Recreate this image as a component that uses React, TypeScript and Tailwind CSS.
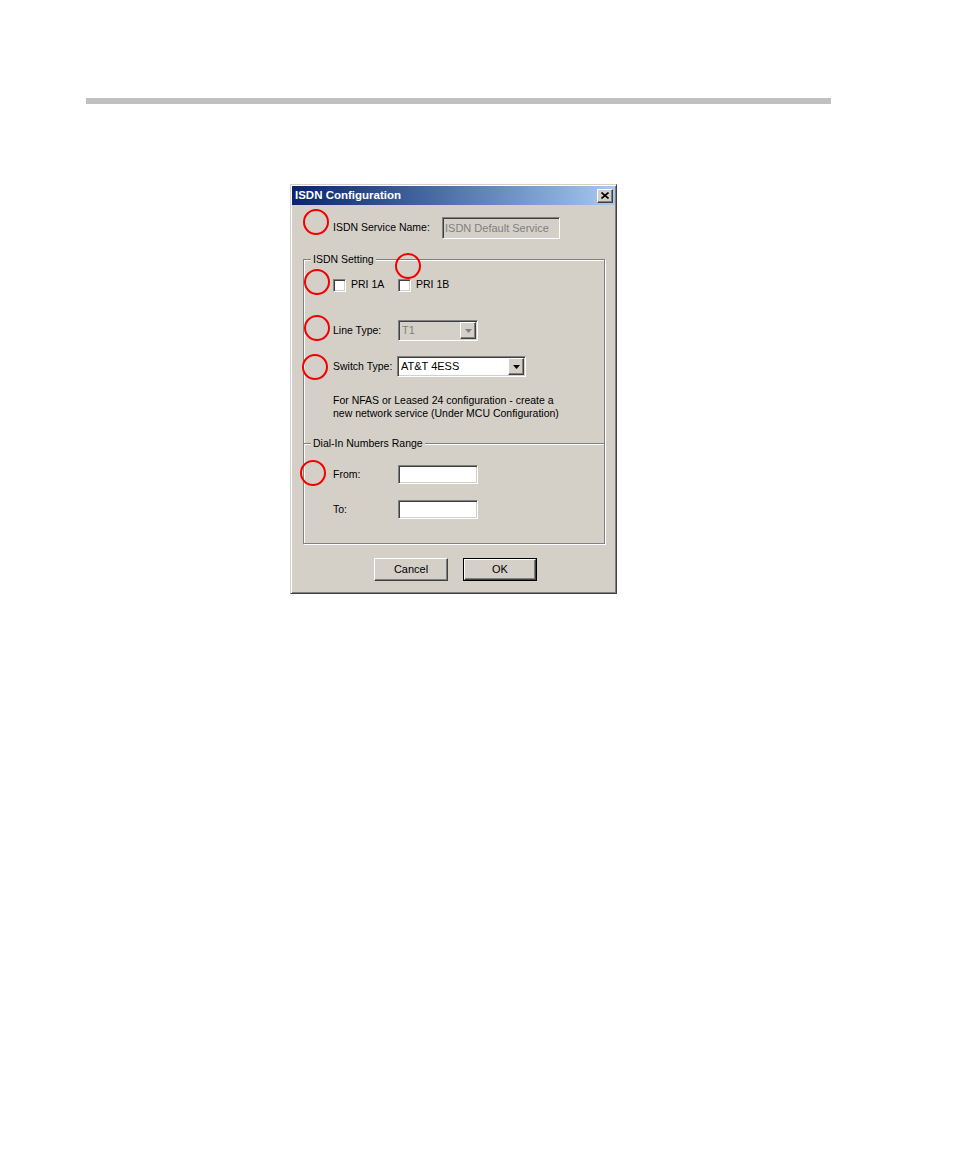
import React from "react";

const sunken =
  "border border-t-[#808080] border-l-[#808080] border-b-white border-r-white shadow-[inset_1px_1px_0_#404040,inset_-1px_-1px_0_#d4d0c8]";
const raised =
  "border border-t-white border-l-white border-b-[#404040] border-r-[#404040] shadow-[inset_-1px_-1px_0_#808080]";
const etched =
  "border-[#808080] shadow-[1px_1px_0_#ffffff,inset_1px_1px_0_#ffffff]";

function Mark({ className }: { className: string }) {
  // red annotation circle drawn over the dialog
  return (
    <div
      className={`absolute w-[26px] h-[26px] rounded-full border-2 border-[#f20000] ${className}`}
    />
  );
}

function Combo({
  value,
  width,
  disabled,
}: {
  value: string;
  width: string;
  disabled?: boolean;
}) {
  return (
    <div
      className={`${sunken} ${width} h-[21px] flex items-center ${
        disabled ? "bg-[#d4d0c8]" : "bg-white"
      }`}
    >
      <span
        className={`flex-1 pl-[3px] leading-none text-[11px] ${
          disabled ? "text-[#808080]" : "text-black"
        }`}
      >
        {value}
      </span>
      <div
        className={`${raised} bg-[#d4d0c8] w-[16px] h-[17px] mr-[1px] flex items-center justify-center`}
      >
        <svg width="7" height="4" viewBox="0 0 7 4">
          <path d="M0 0h7L3.5 4z" fill={disabled ? "#808080" : "#000"} />
        </svg>
      </div>
    </div>
  );
}

function Check({ label }: { label: string }) {
  return (
    <div className="flex items-center">
      <div className={`${sunken} bg-white w-[13px] h-[13px]`} />
      <span className="ml-[5px] w-[47px]">{label}</span>
    </div>
  );
}

export default function App() {
  return (
    <div
      className="bg-white min-h-[1155px] w-full overflow-hidden text-[10.5px] text-black"
      style={{ fontFamily: '"Liberation Sans", Arial, sans-serif' }}
    >
      {/* page rule */}
      <div className="mt-[98px] ml-[86px] w-[745px] h-[6px] bg-[#c0c0c0]" />

      {/* dialog */}
      <div className="relative mt-[80px] ml-[290px] w-[327px] h-[410px] bg-[#d4d0c8] border border-t-[#d4d0c8] border-l-[#d4d0c8] border-b-[#404040] border-r-[#404040] shadow-[inset_1px_1px_0_#ffffff,inset_-1px_-1px_0_#808080]">
        {/* title bar */}
        <div className="mx-[1px] mt-[1px] h-[19px] flex items-center justify-between bg-gradient-to-r from-[#0a246a] to-[#a6caf0] pl-[3px] pr-[2px]">
          <span className="text-white font-bold text-[11.5px] leading-none">
            ISDN Configuration
          </span>
          <div
            className={`${raised} bg-[#d4d0c8] w-[16px] h-[14px] flex items-center justify-center`}
          >
            <svg width="8" height="7" viewBox="0 0 8 7">
              <path
                d="M0.5 0.5l7 6M7.5 0.5l-7 6"
                stroke="#000"
                strokeWidth="1.6"
              />
            </svg>
          </div>
        </div>

        {/* service name */}
        <div className="mt-[12px] h-[22px] flex items-center pl-[42px]">
          <span className="w-[109px]">ISDN Service Name:</span>
          <div
            className={`${sunken} bg-[#d4d0c8] w-[118px] h-[22px] flex items-center pl-[2px] text-[11px] text-[#808080]`}
          >
            ISDN Default Service
          </div>
        </div>

        {/* ISDN Setting group */}
        <div
          className={`relative mt-[20px] ml-[12px] w-[302px] h-[184px] border-t border-l border-r ${etched}`}
        >
          <span className="absolute -top-[8px] left-[7px] px-[2px] bg-[#d4d0c8] leading-[14px]">
            ISDN Setting
          </span>
          <div className="mt-[14px] h-[22px] flex items-center pl-[29px]">
            <Check label="PRI 1A" />
            <Check label="PRI 1B" />
          </div>
          <div className="mt-[24px] flex items-center pl-[29px]">
            <span className="w-[65px]">Line Type:</span>
            <Combo value="T1" width="w-[80px]" disabled />
          </div>
          <div className="mt-[15px] flex items-center pl-[29px]">
            <span className="w-[64px]">Switch Type:</span>
            <Combo value="AT&T 4ESS" width="w-[129px]" />
          </div>
          <p className="mt-[17px] pl-[29px] leading-[13px]">
            For NFAS or Leased 24 configuration - create a
            <br />
            new network service (Under MCU Configuration)
          </p>
        </div>

        {/* Dial-In Numbers Range group */}
        <div className={`relative ml-[12px] w-[302px] h-[101px] border ${etched}`}>
          <span className="absolute -top-[8px] left-[7px] px-[2px] bg-[#d4d0c8] leading-[14px]">
            Dial-In Numbers Range
          </span>
          <div className="mt-[21px] flex items-center pl-[29px]">
            <span className="w-[65px]">From:</span>
            <div className={`${sunken} bg-white w-[80px] h-[19px]`} />
          </div>
          <div className="mt-[16px] flex items-center pl-[29px]">
            <span className="w-[65px]">To:</span>
            <div className={`${sunken} bg-white w-[80px] h-[19px]`} />
          </div>
        </div>

        {/* buttons */}
        <div className="mt-[14px] flex pl-[83px] gap-[15px]">
          <button
            className={`${raised} bg-[#d4d0c8] w-[74px] h-[23px] text-[11px]`}
          >
            Cancel
          </button>
          <div className="border border-black">
            <button
              className={`${raised} bg-[#d4d0c8] w-[72px] h-[21px] text-[11px]`}
            >
              OK
            </button>
          </div>
        </div>

        {/* annotation marks */}
        <Mark className="left-[12px] top-[24px]" />
        <Mark className="left-[13px] top-[84px]" />
        <Mark className="left-[104px] top-[68px]" />
        <Mark className="left-[13px] top-[130px]" />
        <Mark className="left-[11px] top-[169px]" />
        <Mark className="left-[9px] top-[275px]" />
      </div>
    </div>
  );
}
